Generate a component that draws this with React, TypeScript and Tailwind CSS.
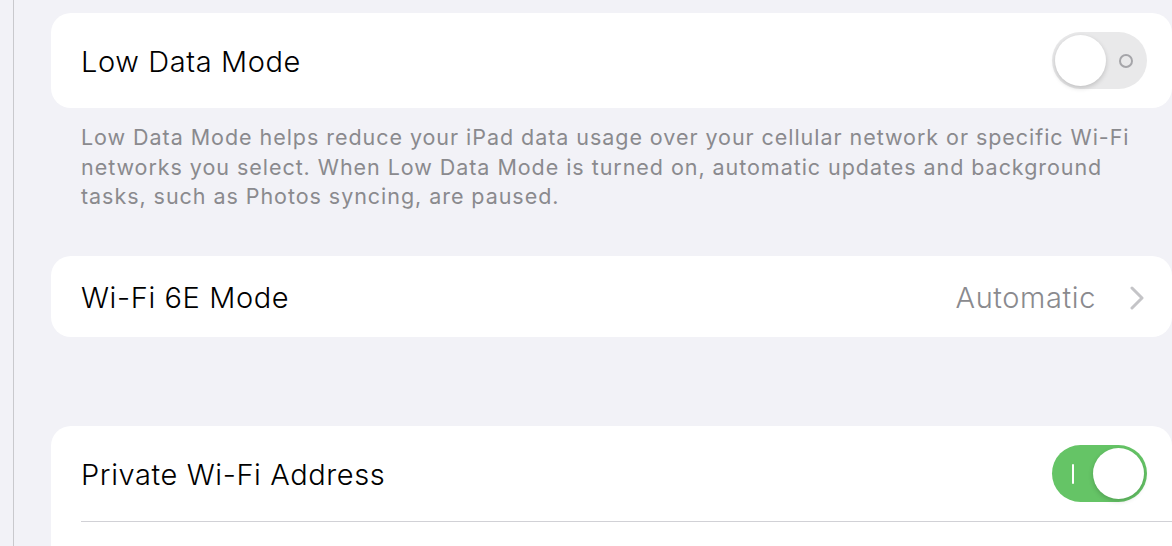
import React from 'react';

function Toggle({ on }: { on: boolean }) {
  if (on) {
    return (
      <div className="relative flex h-[57px] w-[95px] flex-none items-center rounded-full bg-[#65c466]">
        <span className="absolute left-[20px] top-[19px] h-[20px] w-[2px] rounded-full bg-white" />
        <span className="absolute right-[3px] top-[3px] h-[51px] w-[51px] rounded-full bg-white shadow-[0_2px_5px_rgba(0,0,0,0.18)]" />
      </div>
    );
  }
  return (
    <div className="relative flex h-[57px] w-[95px] flex-none items-center rounded-full bg-[#e9e9ea]">
      <span className="absolute right-[14px] top-[22px] h-[14px] w-[14px] rounded-full border-2 border-[#a5a5a9]" />
      <span className="absolute left-[3px] top-[3px] h-[51px] w-[51px] rounded-full bg-white shadow-[0_2px_5px_rgba(0,0,0,0.18)]" />
    </div>
  );
}

export default function App() {
  return (
    <div
      className="flex h-[546px] w-[1172px] overflow-hidden bg-[#f2f2f7]"
      style={{ fontFamily: 'Inter, "Noto Sans", sans-serif' }}
    >
      {/* left sidebar divider */}
      <div className="w-[14px] flex-none border-r border-[#c9c9cd]" />

      <div className="flex flex-1 flex-col pl-[37px] pt-[13px]">
        {/* Low Data Mode */}
        <div className="flex h-[95px] items-center justify-between rounded-[20px] bg-white pl-[30px] pr-[25px]">
          <span className="pt-[3px] text-[29px] font-light tracking-[0.6px] text-black">Low Data Mode</span>
          <Toggle on={false} />
        </div>
        <p className="px-[30px] pt-[15px] text-[21.5px] leading-[29.5px] tracking-[0.95px] text-[#8a8a8e]">
          Low Data Mode helps reduce your iPad data usage over your cellular network or specific Wi-Fi
          networks you select. When Low Data Mode is turned on, automatic updates and background
          tasks, such as Photos syncing, are paused.
        </p>

        {/* Wi-Fi 6E Mode */}
        <div className="mt-[44px] flex h-[81px] items-center justify-between rounded-[20px] bg-white pl-[30px] pr-[28px]">
          <span className="pt-[3px] text-[29px] font-light tracking-[0.6px] text-black">Wi-Fi 6E Mode</span>
          <div className="flex items-center gap-[34px] pt-[3px]">
            <span className="text-[29px] font-light tracking-[0.6px] text-[#8a8a8e]">Automatic</span>
            <svg width="14" height="24" viewBox="0 0 14 24" fill="none">
              <path d="M2 2l10 10-10 10" stroke="#c4c4c7" strokeWidth="3" strokeLinecap="round" strokeLinejoin="round" />
            </svg>
          </div>
        </div>

        {/* Private Wi-Fi Address */}
        <div className="mt-[89px] flex flex-1 flex-col rounded-t-[20px] bg-white pl-[30px]">
          <div className="flex h-[95px] items-center justify-between pr-[25px]">
            <span className="pt-[3px] text-[29px] font-light tracking-[0.6px] text-black">Private Wi-Fi Address</span>
            <Toggle on={true} />
          </div>
          <div className="h-px bg-[#d1d1d6]" />
        </div>
      </div>
    </div>
  );
}
